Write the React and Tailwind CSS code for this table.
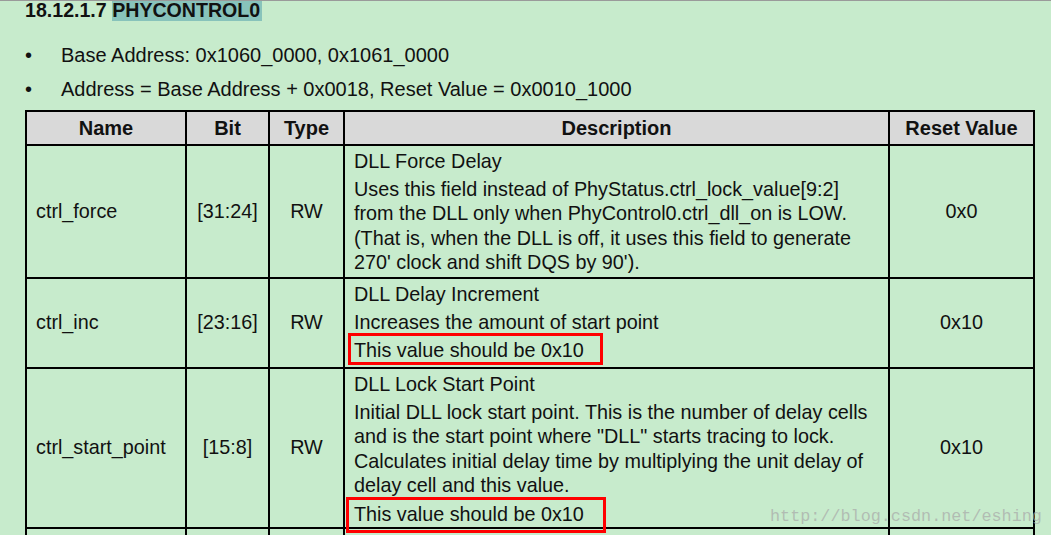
import React from "react";

const rows = [
  {
    name: "ctrl_force",
    bit: "[31:24]",
    type: "RW",
    reset: "0x0",
    height: "h-[133px]",
    title: "DLL Force Delay",
    lines: [
      "Uses this field instead of PhyStatus.ctrl_lock_value[9:2]",
      "from the DLL only when PhyControl0.ctrl_dll_on is LOW.",
      "(That is, when the DLL is off, it uses this field to generate",
      "270' clock and shift DQS by 90').",
    ],
  },
  {
    name: "ctrl_inc",
    bit: "[23:16]",
    type: "RW",
    reset: "0x10",
    height: "h-[90px]",
    title: "DLL Delay Increment",
    lines: ["Increases the amount of start point"],
    note: "This value should be 0x10",
    box: "-left-[6px] w-[255px] -top-[5px] -bottom-[2px]",
  },
  {
    name: "ctrl_start_point",
    bit: "[15:8]",
    type: "RW",
    reset: "0x10",
    height: "h-[160px]",
    title: "DLL Lock Start Point",
    lines: [
      "Initial DLL lock start point. This is the number of delay cells",
      "and is the start point where \"DLL\" starts tracing to lock.",
      "Calculates initial delay time by multiplying the unit delay of",
      "delay cell and this value.",
    ],
    note: "This value should be 0x10",
    box: "-left-[8px] w-[260px] -top-[5px] -bottom-[7px]",
  },
];

export default function App() {
  const cell = "border-2 border-black text-center align-middle";
  return (
    <div
      className="w-[1051px] h-[535px] overflow-hidden bg-[#c7ebcc] border-t border-[#9a9a9a] text-[#111] relative"
      style={{ fontFamily: '"Liberation Sans", Arial, sans-serif' }}
    >
      {/* heading */}
      <div className="pl-[25px] text-[19.6px] font-bold leading-[20px] h-[20px] -mt-px">
        18.12.1.7{" "}
        <span className="bg-[#88c3bb] pr-[2px]">PHYCONTROL0</span>
      </div>

      <ul className="mt-[18px] text-[20px] leading-[34px]">
        <li className="flex">
          <span className="w-[61px] pl-[25px]">•</span>
          Base Address: 0x1060_0000, 0x1061_0000
        </li>
        <li className="flex">
          <span className="w-[61px] pl-[25px]">•</span>
          Address = Base Address + 0x0018, Reset Value = 0x0010_1000
        </li>
      </ul>

      <table className="ml-[25px] mt-[4px] border-collapse table-fixed w-[1008px] text-[19.8px]">
        <colgroup>
          <col className="w-[160px]" />
          <col className="w-[83px]" />
          <col className="w-[75px]" />
          <col className="w-[545px]" />
          <col className="w-[145px]" />
        </colgroup>
        <thead>
          <tr className="bg-[#d9d9d9] font-bold h-[34px] text-[20px]">
            <th className={cell}>Name</th>
            <th className={cell}>Bit</th>
            <th className={cell}>Type</th>
            <th className={cell}>Description</th>
            <th className={cell}>Reset Value</th>
          </tr>
        </thead>
        <tbody>
          {rows.map((r) => (
            <tr key={r.name} className={r.height}>
              <td className="border-2 border-black align-middle pl-[9px] whitespace-nowrap">{r.name}</td>
              <td className={cell}>{r.bit}</td>
              <td className={cell}>{r.type}</td>
              <td className="border-2 border-black align-top pl-[9px] pt-[3px] leading-[24.5px] whitespace-nowrap">
                <div>{r.title}</div>
                <div className="mt-[3px]">
                  {r.lines.map((l) => (
                    <div key={l}>{l}</div>
                  ))}
                </div>
                {r.note && (
                  <div className="mt-[4px]">
                    <span className="relative inline-block">
                      {r.note}
                      <span className={`absolute border-[3px] border-[#ff0000] ${r.box}`} />
                    </span>
                  </div>
                )}
              </td>
              <td className={cell}>{r.reset}</td>
            </tr>
          ))}
          <tr className="h-[30px]">
            <td className="border-2 border-black"></td>
            <td className="border-2 border-black"></td>
            <td className="border-2 border-black"></td>
            <td className="border-2 border-black"></td>
            <td className="border-2 border-black"></td>
          </tr>
        </tbody>
      </table>

      {/* watermark */}
      <div
        className="absolute left-[770px] top-[503px] text-[16.8px] text-[#a8a8a8]/70"
        style={{ fontFamily: '"Liberation Mono", "DejaVu Sans Mono", monospace' }}
      >
        http://blog.csdn.net/eshing
      </div>
    </div>
  );
}
